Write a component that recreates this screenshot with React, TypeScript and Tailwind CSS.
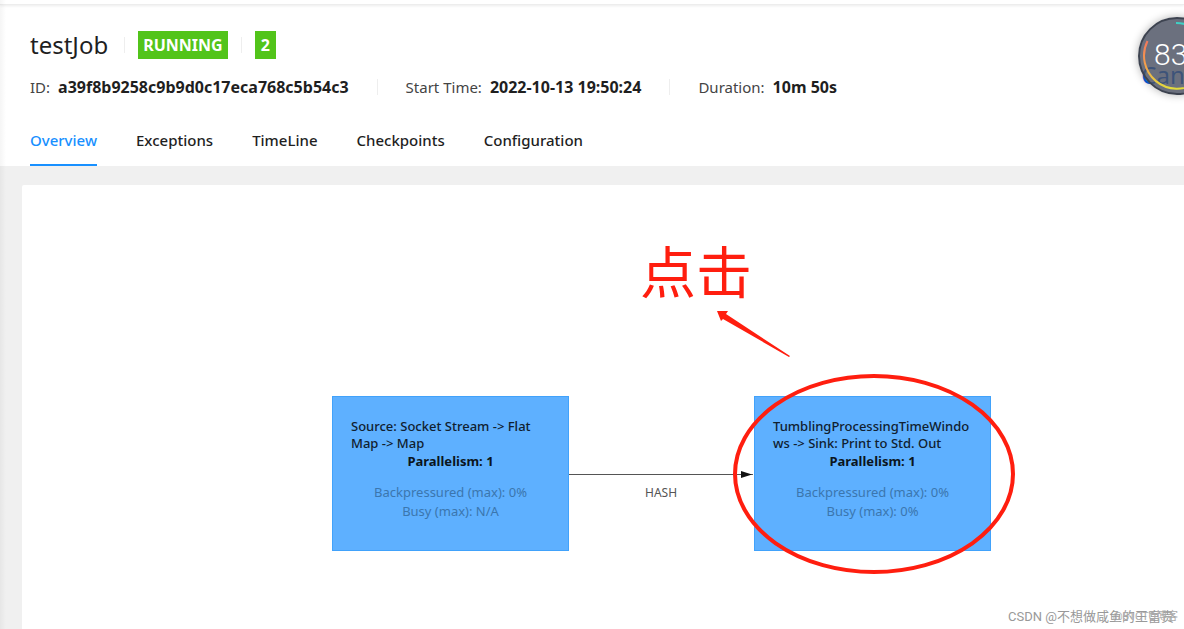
import clsx from "clsx";

const tabs = ["Overview", "Exceptions", "TimeLine", "Checkpoints", "Configuration"];

const details = [
  { label: "ID:", value: "a39f8b9258c9b9d0c17eca768c5b54c3" },
  { label: "Start Time:", value: "2022-10-13 19:50:24" },
  { label: "Duration:", value: "10m 50s" },
];

const nodes = [
  {
    name: "Source: Socket Stream -> Flat Map -> Map",
    parallelism: 1,
    backpressured: "0%",
    busy: "N/A",
    position: "left-[310px] top-[211px]",
  },
  {
    name: "TumblingProcessingTimeWindows -> Sink: Print to Std. Out",
    parallelism: 1,
    backpressured: "0%",
    busy: "0%",
    position: "left-[732px] top-[211px]",
  },
];

function Divider() {
  return <span className="h-4 w-px bg-[#eeeeee]" />;
}

function JobNode({ node }: { node: (typeof nodes)[number] }) {
  return (
    <div
      className={clsx(
        "absolute h-[155px] w-[237px] border border-[#41a2fb] bg-[#5eb0ff] px-[18px] pt-[21px] text-center text-[13px]",
        node.position
      )}
    >
      <p className="text-left leading-[17px] font-medium wrap-break-word text-[#10202f]">{node.name}</p>
      <p className="leading-[19px] font-bold text-[#0b1520]">Parallelism: {node.parallelism}</p>
      <div className="mt-3 leading-[19px] text-[#3b76ae]">
        <p>Backpressured (max): {node.backpressured}</p>
        <p>Busy (max): {node.busy}</p>
      </div>
    </div>
  );
}

function SpeedBall() {
  return (
    <div className="absolute -right-8 top-[17px] size-[78px] rounded-full shadow-[0_0_8px_rgba(0,0,0,0.3)]">
      <svg viewBox="0 0 78 78" className="size-[78px]">
        <defs>
          <linearGradient id="arc" x1="0" y1="0" x2="0" y2="1">
            <stop offset="0" stopColor="#f2785c" />
            <stop offset="0.5" stopColor="#f5a04a" />
            <stop offset="1" stopColor="#e3dc3c" />
          </linearGradient>
        </defs>
        <circle cx="39" cy="39" r="38" fill="#4b5161" fillOpacity="0.82" stroke="#3d4350" strokeWidth="2" />
        <path d="M9.500 24A33 33 0 0 0 59 65" fill="none" stroke="url(#arc)" strokeWidth="2" />
        <path d="M38 6A33 33 0 0 1 69 27" fill="none" stroke="#3fd0c4" strokeWidth="2" />
      </svg>
      <span className="absolute left-4 top-5 font-['Roboto',sans-serif] text-3xl font-light text-white">
        83
      </span>
    </div>
  );
}

export default function App() {
  return (
    <div className="relative flex min-h-screen flex-col overflow-hidden bg-[#f0f0f0] font-['Noto_Sans','Noto_Sans_CJK_SC',sans-serif] text-[#1f1f1f]">
      <header className="relative bg-white">
        <div className="h-[5px] border-b border-[#ededed] shadow-[0_1px_3px_rgba(0,0,0,0.08)]" />

        <div className="flex items-center pl-[30px] pt-6">
          <h1 className="mr-4 text-2xl leading-8">testJob</h1>
          <Divider />
          <span className="mx-[13px] bg-[#52c41a] px-[5px] text-base leading-7 font-bold text-white">
            RUNNING
          </span>
          <Divider />
          <span className="ml-[13px] bg-[#52c41a] px-1.5 text-base leading-7 font-bold text-white">2</span>
        </div>

        <dl className="flex items-center gap-7 pl-[30px] pt-3.5 leading-6">
          {details.map((item, i) => (
            <div key={item.label} className="flex items-center gap-7">
              {i > 0 && <Divider />}
              <div className="flex items-baseline gap-2">
                <dt className="text-[15px] text-[#444444]">{item.label}</dt>
                <dd className="text-base leading-6 font-bold">{item.value}</dd>
              </div>
            </div>
          ))}
        </dl>

        <nav className="flex gap-[39px] pl-[30px] pt-[29px] text-[15px] leading-6 font-medium">
          {tabs.map((tab, i) => (
            <a
              key={tab}
              href={"#" + tab.toLowerCase()}
              className={clsx(
                "border-b-2 pb-3",
                i === 0 ? "border-[#1890ff] text-[#1890ff]" : "border-transparent"
              )}
            >
              {tab}
            </a>
          ))}
        </nav>

        <a href="#cancel" className="absolute -right-8 top-[59px] text-2xl leading-8 text-[#0060e0]">
          Cancel
        </a>
        <SpeedBall />
      </header>

      <main className="flex flex-1 flex-col pl-[22px] pt-[19px]">
        <section className="relative min-h-[443px] flex-1 rounded-tl-xs bg-white">
          {nodes.map((node) => (
            <JobNode key={node.name} node={node} />
          ))}

          <span className="absolute left-[623px] top-[300px] text-xs leading-4 text-[#555555]">HASH</span>
          <span className="absolute left-[618px] top-[54px] text-[56px] leading-[64px] text-[#ff1e0f]">
            点击
          </span>

          {/* edge between the nodes and the hand-drawn marks */}
          <svg className="absolute left-0 top-0 h-[443px] w-[1100px]" viewBox="0 0 1100 443">
            <path d="M547 289.500H731" stroke="#555555" fill="none" />
            <path d="M719 286L730 289.500L719 293Z" fill="#111111" />
            <path d="M695 126L706 126L704 129L768 171L767 172L701 134L699 136Z" fill="#ff1e0f" />
            <ellipse cx="852" cy="289" rx="139" ry="98" fill="none" stroke="#ff1e0f" strokeWidth="4" />
          </svg>

          <p className="absolute bottom-1 right-2.5 font-['Roboto','Noto_Sans_CJK_SC',sans-serif] text-[13px] leading-4 text-[#999999]">
            CSDN @不想做咸鱼的王富贵
          </p>
          <p className="absolute bottom-1 right-1.5 font-['Roboto','Noto_Sans_CJK_SC',sans-serif] text-[11px] leading-4 text-[#aaaaaa]">
            @51CTO博客
          </p>
        </section>
      </main>

      <div className="pointer-events-none absolute inset-y-0 left-0 w-1.5 bg-linear-to-r from-black/4 to-transparent" />
    </div>
  );
}
